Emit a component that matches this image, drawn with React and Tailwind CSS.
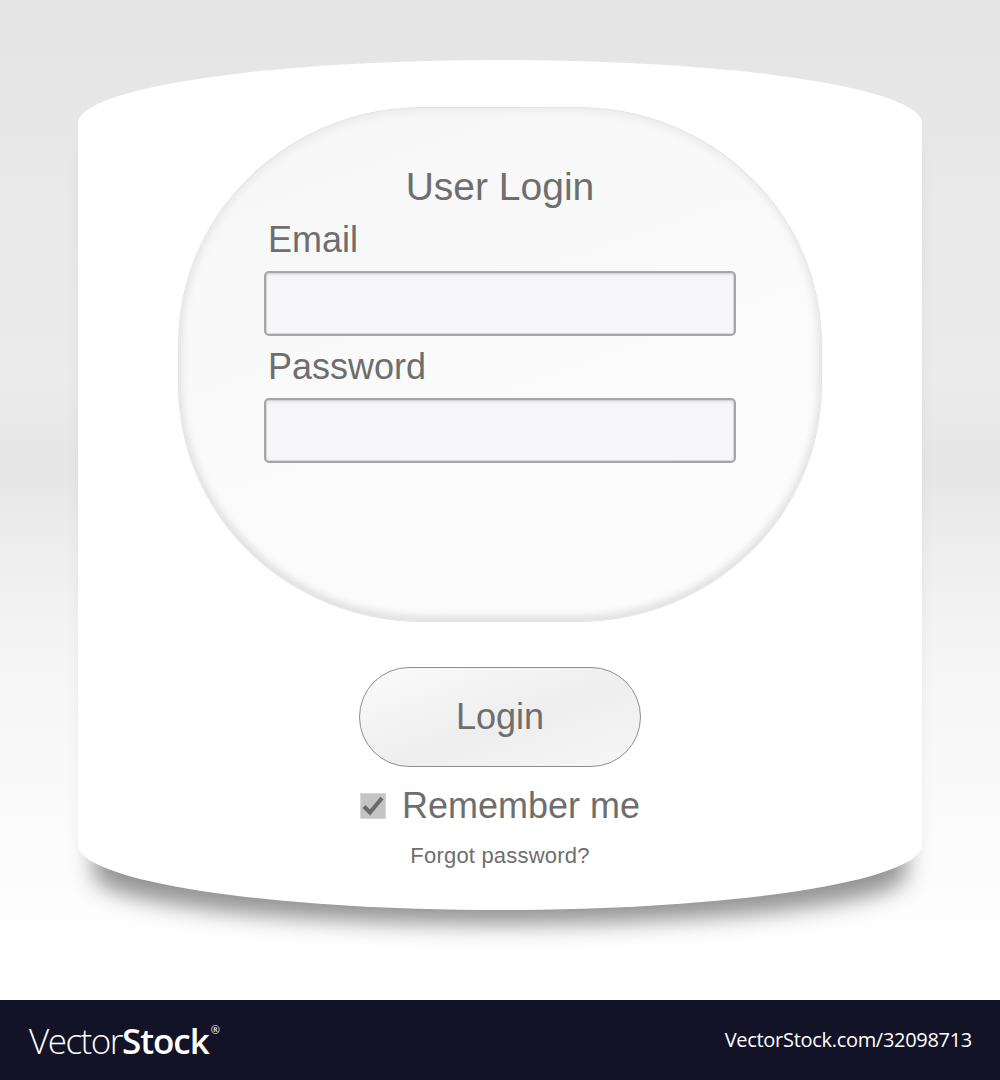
import React from "react";

export default function App() {
  const sans = { fontFamily: '"Liberation Sans", Arial, sans-serif' };
  return (
    <div className="w-[1000px] h-[1080px] flex flex-col" style={sans}>
      <div className="h-[1000px] w-full pt-[60px] bg-[linear-gradient(to_bottom,#e4e4e4_0%,#e9e9e9_20%,#ebebeb_38%,#e6e6e6_47%,#eeeeee_55%,#f5f5f5_66%,#fafafa_80%,#fefefe_94%,#ffffff_100%)]">
        <div className="mx-auto w-[844px] h-[850px] bg-white rounded-[50%/63px_63px_65px_65px] shadow-[0_30px_22px_-16px_rgba(0,0,0,0.42)] flex flex-col items-center">
          {/* Oval panel */}
          <div className="mt-[47px] w-[644px] h-[515px] rounded-[38%/46%] border border-[#e4e4e4] bg-[linear-gradient(160deg,#f6f6f6_0%,#fafafa_45%,#fdfdfd_100%)] shadow-[inset_0_-6px_10px_rgba(0,0,0,0.07),inset_0_0_8px_4px_rgba(0,0,0,0.05)] flex flex-col items-center pt-[57px]">
            <div className="w-[472px] flex flex-col">
              <div className="text-center text-[39px] leading-[44px] text-[#6e6e6e]">User Login</div>
              <div className="mt-[11px] pl-[4px] text-[36px] leading-[40px] text-[#6e6e6e]">Email</div>
              <div className="mt-[11px] h-[65px] rounded-[5px] border-[2.5px] border-[#a6a6a6] bg-[#f6f6f8] shadow-[inset_0_0_0_1px_#d6d6d6,inset_0_2px_3px_rgba(0,0,0,0.08)]" />
              <div className="mt-[11px] pl-[4px] text-[36px] leading-[40px] text-[#6e6e6e]">Password</div>
              <div className="mt-[11px] h-[65px] rounded-[5px] border-[2.5px] border-[#a6a6a6] bg-[#f6f6f8] shadow-[inset_0_0_0_1px_#d6d6d6,inset_0_2px_3px_rgba(0,0,0,0.08)]" />
            </div>
          </div>

          {/* Login button */}
          <div className="mt-[45px] w-[282px] h-[100px] rounded-full border-[1.5px] border-[#8e8e8e] bg-[linear-gradient(160deg,#fbfbfb_0%,#eeeeee_55%,#f7f7f7_100%)] flex items-center justify-center">
            <span className="text-[36px] leading-[40px] text-[#6e6e6e]">Login</span>
          </div>

          {/* Remember me */}
          <div className="mt-[19px] h-[40px] flex items-center">
            <div className="w-[26px] h-[26px] bg-[#c4c4c4] border border-[#d6d6d6] flex items-center justify-center">
              <svg width="24" height="24" viewBox="0 0 24 24">
                <path d="M3 12.5 L9 18.5 L21 4" fill="none" stroke="#6a6a6a" strokeWidth="4.2" strokeLinecap="butt" strokeLinejoin="miter" />
              </svg>
            </div>
            <span className="ml-[16px] text-[36px] leading-[40px] text-[#6e6e6e]">Remember me</span>
          </div>

          {/* Forgot */}
          <div className="mt-[18px] text-[22px] leading-[24px] tracking-[0.2px] text-[#6e6e6e]">Forgot password?</div>
        </div>
      </div>

      {/* Footer */}
      <div className="h-[80px] w-full bg-[#121327] flex items-center justify-between pl-[29px] pr-[28px]" style={{ fontFamily: '"Open Sans", Roboto, sans-serif' }}>
        <div className="flex items-start text-white leading-none">
          <span className="text-[35px] font-light tracking-[-1.5px]">Vector</span>
          <span className="text-[35px] font-semibold tracking-[-1px]">Stock</span>
          <span className="text-[11px] ml-[2px] mt-[1px]">®</span>
        </div>
        <div className="text-white text-[20px] tracking-[-0.3px] leading-none">VectorStock.com/32098713</div>
      </div>
    </div>
  );
}
